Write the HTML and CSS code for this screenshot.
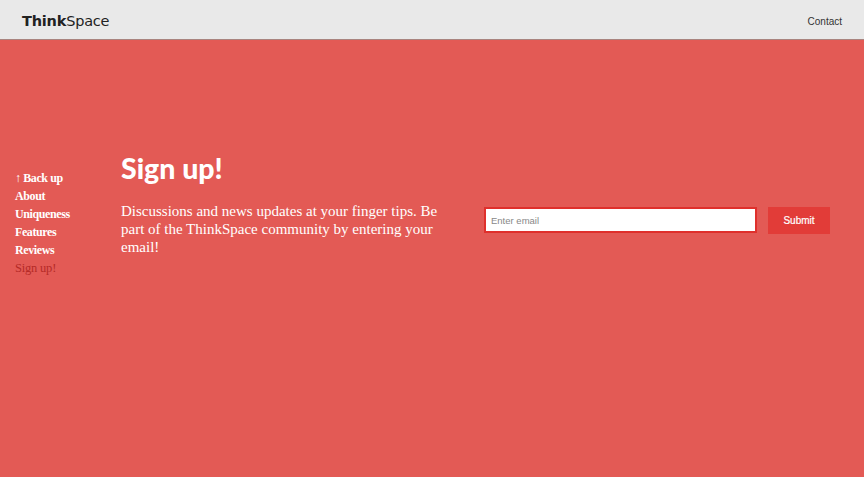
FILE: index.html
```html
<!DOCTYPE html>
<html>
<head>
<meta charset="utf-8">
<link rel="stylesheet" href="styles.css">
</head>
<body>
<header class="topbar">
  <div class="logo"><b>Think</b>Space</div>
  <a class="contact" href="#">Contact</a>
</header>
<main class="section">
  <nav class="sidenav">
    <a href="#">&#8593; Back up</a>
    <a href="#">About</a>
    <a href="#">Uniqueness</a>
    <a href="#">Features</a>
    <a href="#">Reviews</a>
    <a href="#" class="active">Sign up!</a>
  </nav>
  <div class="intro">
    <h1>Sign up!</h1>
    <p>Discussions and news updates at your finger tips. Be part of the ThinkSpace community by entering your email!</p>
  </div>
  <form class="signup">
    <input type="text" placeholder="Enter email">
    <button type="button">Submit</button>
  </form>
</main>
</body>
</html>
```
FILE: styles.css
```css
html, body { margin: 0; padding: 0; }
body {
  background: #e35a55;
  height: 477px;
  overflow: hidden;
  font-family: "Liberation Serif", serif;
}
.topbar {
  background: #e9e9e9;
  border-bottom: 1px solid #a9847f;
  display: flex;
  align-items: center;
  justify-content: space-between;
  padding: 3px 22px 0;
  box-sizing: border-box;
  height: 40px;
}
.logo {
  font-family: "DejaVu Sans", sans-serif;
  font-size: 14.5px;
  color: #222;
  letter-spacing: -0.2px;
}
.logo b { font-weight: bold; }
.contact {
  font-family: "Liberation Sans", sans-serif;
  font-size: 10px;
  color: #333;
  text-decoration: none;
}
.section {
  display: flex;
  align-items: flex-start;
  padding-top: 110px;
}
.sidenav {
  width: 106px;
  flex: none;
  padding-left: 15px;
  margin-top: 19px;
  display: flex;
  flex-direction: column;
}
.sidenav a {
  color: #fff;
  text-decoration: none;
  font-weight: bold;
  font-size: 12px;
  letter-spacing: -0.4px;
  line-height: 18px;
}
.sidenav a.active { color: #b52a27; font-weight: normal; font-size: 12.5px; letter-spacing: -0.2px; }
.intro {
  width: 340px;
  flex: none;
}
.intro h1 {
  font-family: "Lato", sans-serif;
  font-weight: 900;
  font-size: 28.5px;
  line-height: 36px;
  color: #fff;
  margin: 0;
}
.intro p {
  margin: 16px 0 0;
  color: #fff;
  font-size: 15px;
  line-height: 18px;
}
.signup {
  display: flex;
  flex: none;
  margin: 57px 0 0 23px;
}
.signup input {
  width: 273px;
  height: 26px;
  box-sizing: border-box;
  border: 2px solid #df302c;
  background: #fff;
  padding: 0 5px;
  font-family: "Liberation Sans", sans-serif;
  font-size: 9.5px;
  outline: none;
}
.signup input::placeholder { color: #888; }
.signup button {
  margin-left: 11px;
  width: 62px;
  height: 27px;
  border: none;
  background: #e23c38;
  color: #fff;
  font-family: "Liberation Sans", sans-serif;
  font-size: 10px;
  font-weight: normal;
  -webkit-text-stroke: 0.2px #fff;
}
```
